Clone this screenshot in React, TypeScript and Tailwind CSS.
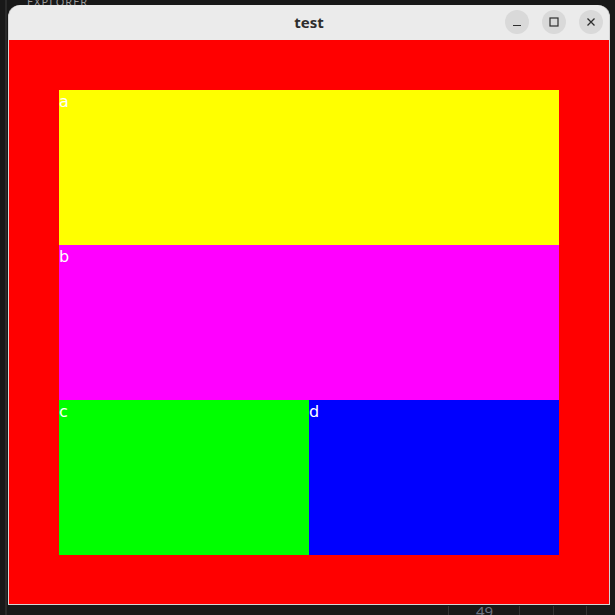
import React from "react";

export default function App() {
  return (
    <div className="relative w-[615px] h-[615px] overflow-hidden bg-[#181818] pt-[5px] pl-[8px]" style={{ fontFamily: '"Noto Sans", "DejaVu Sans", sans-serif' }}>
      {/* desktop background bits */}
      <div className="absolute left-[5px] top-0 h-[615px] w-[2px] bg-[#2a2a2a]" />
      <div className="absolute left-[27px] top-[-6px] text-[11px] tracking-[1px] text-[#9a9a9a]">EXPLORER</div>
      <div className="absolute left-[476px] top-[604px] text-[15px] leading-[15px] text-[#6b7280]">49</div>
      <div className="absolute left-[448px] top-[606px] h-[9px] w-px bg-[#333]" />
      <div className="absolute left-[519px] top-[606px] h-[9px] w-px bg-[#333]" />
      <div className="absolute left-[553px] top-[606px] h-[9px] w-px bg-[#333]" />
      <div className="absolute left-[586px] top-[606px] h-[9px] w-px bg-[#333]" />

      {/* window */}
      <div className="relative w-[602px] rounded-t-[12px] overflow-hidden bg-[#ebebeb] border-x border-b border-[#d4d4d4]">
        <div className="relative h-[35px] flex items-center justify-center">
          <span className="text-[15px] font-bold text-[#2e2e2e]">test</span>
          <div className="absolute right-[6px] top-[5px] flex gap-[13px]">
            <div className="w-[24px] h-[24px] rounded-full bg-[#d9d9d9] flex items-center justify-center">
              <svg width="10" height="10" viewBox="0 0 10 10"><path d="M1 8.5h8" stroke="#2e2e2e" strokeWidth="1.2" /></svg>
            </div>
            <div className="w-[24px] h-[24px] rounded-full bg-[#d9d9d9] flex items-center justify-center">
              <svg width="10" height="10" viewBox="0 0 10 10"><rect x="1" y="1" width="8" height="8" fill="none" stroke="#2e2e2e" strokeWidth="1.2" /></svg>
            </div>
            <div className="w-[24px] h-[24px] rounded-full bg-[#d9d9d9] flex items-center justify-center">
              <svg width="10" height="10" viewBox="0 0 10 10"><path d="M1.5 1.5l7 7M8.5 1.5l-7 7" stroke="#2e2e2e" strokeWidth="1.3" /></svg>
            </div>
          </div>
        </div>
        <div className="bg-[#ff0000] h-[564px] p-[50px]" style={{ fontFamily: '"DejaVu Sans", sans-serif' }}>
          <div className="flex flex-col w-[500px] text-white text-[16px] leading-[24px]">
            <div className="h-[155px] bg-[#ffff00]">a</div>
            <div className="h-[155px] bg-[#ff00ff]">b</div>
            <div className="h-[155px] flex">
              <div className="w-[250px] bg-[#00ff00]">c</div>
              <div className="w-[250px] bg-[#0000ff]">d</div>
            </div>
          </div>
        </div>
      </div>
    </div>
  );
}
